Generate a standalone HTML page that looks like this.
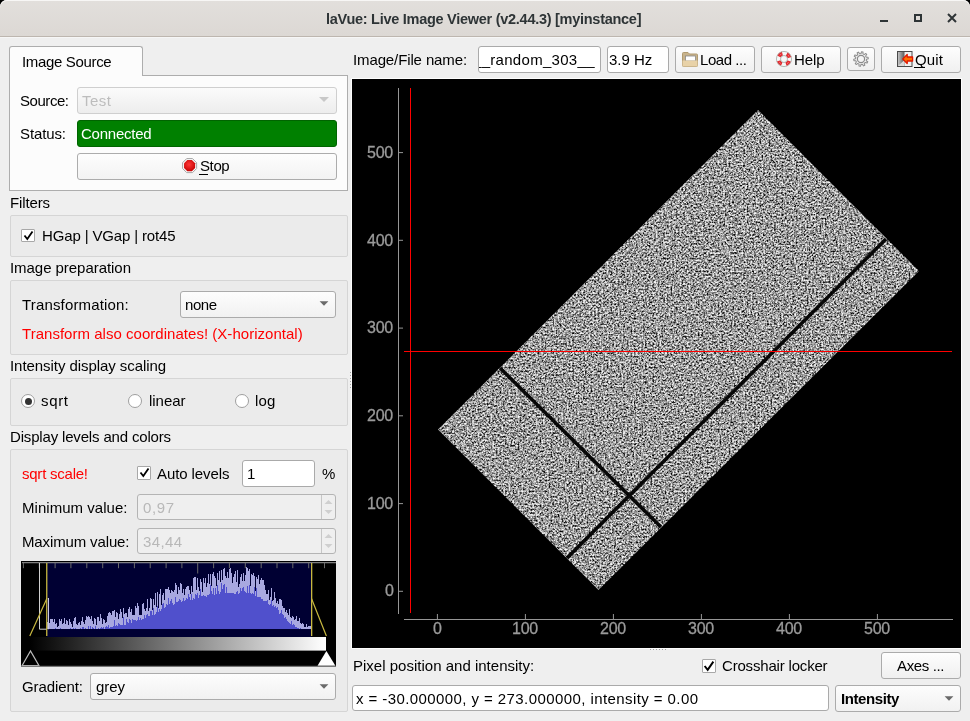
<!DOCTYPE html>
<html><head><meta charset="utf-8"><style>
*{margin:0;padding:0;box-sizing:border-box}
html,body{width:970px;height:721px;overflow:hidden;background:#000}
body{position:relative;font-family:"Liberation Sans",sans-serif}
.t{position:absolute;white-space:nowrap;will-change:transform}
.b{position:absolute}
</style></head>
<body>
<div class="b" style="left:0px;top:0px;width:970px;height:721px;background:#efefef;border-radius:7px 7px 0 0;"></div>
<div class="b" style="left:0px;top:0px;width:970px;height:37px;background:linear-gradient(#e2dfdc,#dcd8d4);border-radius:7px 7px 0 0;border-bottom:1px solid #bdb6af;box-shadow:0 1px 0 #f6f6f6, inset 0 1px 0 #f7f6f5;"></div>
<div class="t" style="left:326.30px;top:11.68px;font-size:14.5px;line-height:14.5px;color:#2e3436;letter-spacing:-0.272px;font-weight:bold;">laVue: Live Image Viewer (v2.44.3) [myinstance]</div>
<div class="b" style="left:880px;top:20px;width:8px;height:2px;background:#2e3436;"></div>
<div class="b" style="left:914px;top:14px;width:8px;height:8px;border:2px solid #2e3436;"></div>
<svg class="b" style="left:946px;top:12px" width="12" height="12" viewBox="0 0 12 12"><path d="M2 2L10 10M10 2L2 10" stroke="#2e3436" stroke-width="2"/></svg>
<div class="b" style="left:9px;top:75px;width:339px;height:116px;background:#fcfcfc;border:1px solid #adadad;"></div>
<div class="b" style="left:9px;top:46px;width:134px;height:30px;background:#fcfcfc;border:1px solid #adadad;border-bottom:none;border-radius:3px 3px 0 0;"></div>
<div class="t" style="left:22.10px;top:54.25px;font-size:15px;line-height:15px;color:#000;letter-spacing:-0.335px;">Image Source</div>
<div class="t" style="left:20.40px;top:93.25px;font-size:15px;line-height:15px;color:#000;letter-spacing:-0.449px;">Source:</div>
<div class="b" style="left:77px;top:87px;width:260px;height:27px;background:linear-gradient(#fbfbfb,#ededed);border:1px solid #cfcfcf;border-radius:3px;"></div>
<div class="t" style="left:82.20px;top:93.25px;font-size:15px;line-height:15px;color:#bdbdbd;letter-spacing:0.430px;">Test</div>
<svg class="b" style="left:319px;top:97px" width="10" height="6"><path d="M0 0H10L5 5Z" fill="#c8c8c8"/></svg>
<div class="t" style="left:20.40px;top:126.25px;font-size:15px;line-height:15px;color:#000;letter-spacing:-0.115px;">Status:</div>
<div class="b" style="left:77px;top:120px;width:260px;height:27px;background:#008000;border:1px solid #006400;border-radius:3px;"></div>
<div class="t" style="left:80.70px;top:126.25px;font-size:15px;line-height:15px;color:#fff;letter-spacing:-0.244px;">Connected</div>
<div class="b" style="left:77px;top:153px;width:260px;height:27px;background:linear-gradient(#fdfdfd,#f3f3f3);border:1px solid #acacac;border-radius:3px;"></div>
<svg class="b" style="left:182px;top:158px" width="16" height="16" viewBox="0 0 16 16"><defs><radialGradient id="sg" cx="0.45" cy="0.4" r="0.65"><stop offset="0" stop-color="#ff3838"/><stop offset="1" stop-color="#c40000"/></radialGradient></defs><path d="M14.62 10.51L10.51 14.62L4.69 14.62L0.58 10.51L0.58 4.69L4.69 0.58L10.51 0.58L14.62 4.69Z" fill="#fafafa" stroke="#9c9c9c" stroke-width="0.9"/><path d="M13.14 9.90L9.90 13.14L5.30 13.14L2.06 9.90L2.06 5.30L5.30 2.06L9.90 2.06L13.14 5.30Z" fill="url(#sg)"/></svg>
<div class="t" style="left:199.50px;top:158.25px;font-size:15px;line-height:15px;color:#000;letter-spacing:-0.386px;">Stop</div>
<div class="b" style="left:199px;top:174px;width:9px;height:1px;background:#000;"></div>
<div class="t" style="left:10.00px;top:195.25px;font-size:15px;line-height:15px;color:#000;letter-spacing:-0.139px;">Filters</div>
<div class="b" style="left:10px;top:215px;width:338px;height:42px;background:#ebebeb;border:1px solid #d5d5d5;border-radius:2px;"></div>
<div class="b" style="left:21px;top:229px;width:14px;height:13px;background:#fff;border:1px solid #a8a8a8;border-radius:1px;"></div>
<svg class="b" style="left:23px;top:230px" width="11" height="11" viewBox="0 0 11 11"><path d="M1.5 5.5L4.3 9L9.5 1.5" fill="none" stroke="#000" stroke-width="1.8"/></svg>
<div class="t" style="left:41.80px;top:228.25px;font-size:15px;line-height:15px;color:#000;letter-spacing:-0.144px;">HGap | VGap | rot45</div>
<div class="t" style="left:10.00px;top:260.25px;font-size:15px;line-height:15px;color:#000;letter-spacing:-0.047px;">Image preparation</div>
<div class="b" style="left:10px;top:280px;width:338px;height:75px;background:#ebebeb;border:1px solid #d5d5d5;border-radius:2px;"></div>
<div class="t" style="left:21.70px;top:297.25px;font-size:15px;line-height:15px;color:#000;letter-spacing:0.158px;">Transformation:</div>
<div class="b" style="left:180px;top:291px;width:156px;height:27px;background:linear-gradient(#fdfdfd,#f1f1f1);border:1px solid #ababab;border-radius:3px;"></div>
<div class="t" style="left:185.00px;top:297.25px;font-size:15px;line-height:15px;color:#000;letter-spacing:-0.457px;">none</div>
<svg class="b" style="left:319px;top:301px" width="10" height="6"><path d="M0.6 0.3H9.4L5 4.8Z" fill="#6a6a6a"/></svg>
<div class="t" style="left:21.70px;top:326.25px;font-size:15px;line-height:15px;color:#f00;letter-spacing:0.028px;">Transform also coordinates! (X-horizontal)</div>
<div class="t" style="left:10.20px;top:358.25px;font-size:15px;line-height:15px;color:#000;letter-spacing:-0.058px;">Intensity display scaling</div>
<div class="b" style="left:10px;top:378px;width:338px;height:48px;background:#ebebeb;border:1px solid #d5d5d5;border-radius:2px;"></div>
<div class="b" style="left:21px;top:394px;width:14px;height:14px;border-radius:50%;background:#fff;border:1px solid #9f9f9f;"></div>
<div class="b" style="left:24.5px;top:397.5px;width:7px;height:7px;border-radius:50%;background:#333;"></div>
<div class="t" style="left:41.40px;top:393.25px;font-size:15px;line-height:15px;color:#000;letter-spacing:0.665px;">sqrt</div>
<div class="b" style="left:128px;top:394px;width:14px;height:14px;border-radius:50%;background:#fff;border:1px solid #9f9f9f;"></div>
<div class="t" style="left:148.50px;top:393.25px;font-size:15px;line-height:15px;color:#000;letter-spacing:-0.038px;">linear</div>
<div class="b" style="left:235px;top:394px;width:14px;height:14px;border-radius:50%;background:#fff;border:1px solid #9f9f9f;"></div>
<div class="t" style="left:255.00px;top:393.25px;font-size:15px;line-height:15px;color:#000;letter-spacing:0.141px;">log</div>
<div class="t" style="left:9.70px;top:429.25px;font-size:15px;line-height:15px;color:#000;letter-spacing:-0.166px;">Display levels and colors</div>
<div class="b" style="left:10px;top:449px;width:338px;height:263px;background:#ebebeb;border:1px solid #d5d5d5;border-radius:2px;"></div>
<div class="t" style="left:21.50px;top:466.25px;font-size:15px;line-height:15px;color:#f00;letter-spacing:-0.236px;">sqrt scale!</div>
<div class="b" style="left:137px;top:466px;width:14px;height:14px;background:#fff;border:1px solid #a8a8a8;border-radius:1px;"></div>
<svg class="b" style="left:138.5px;top:467px" width="11" height="11" viewBox="0 0 11 11"><path d="M1.5 5.5L4.3 9L9.5 1.5" fill="none" stroke="#000" stroke-width="1.8"/></svg>
<div class="t" style="left:157.00px;top:466.25px;font-size:15px;line-height:15px;color:#000;letter-spacing:-0.098px;">Auto levels</div>
<div class="b" style="left:242px;top:460px;width:73px;height:27px;background:#fff;border:1px solid #aaaaaa;border-radius:3px;"></div>
<div class="t" style="left:247.00px;top:466.25px;font-size:15px;line-height:15px;color:#000;">1</div>
<div class="t" style="left:321.60px;top:466.25px;font-size:15px;line-height:15px;color:#000;">%</div>
<div class="t" style="left:21.50px;top:500.25px;font-size:15px;line-height:15px;color:#000;letter-spacing:0.036px;">Minimum value:</div>
<div class="b" style="left:137px;top:494px;width:199px;height:26px;background:#efefef;border:1px solid #b4b4b4;border-radius:3px;"></div>
<div class="b" style="left:321px;top:495px;width:1px;height:24px;background:#c6c6c6;"></div>
<svg class="b" style="left:324px;top:499px" width="9" height="16"><path d="M0.5 5L4.5 1L8.5 5Z M0.5 11L4.5 15L8.5 11Z" fill="#cfcfcf"/></svg>
<div class="t" style="left:143.00px;top:500.25px;font-size:15px;line-height:15px;color:#b8b8b8;letter-spacing:0.602px;">0,97</div>
<div class="t" style="left:21.50px;top:534.25px;font-size:15px;line-height:15px;color:#000;letter-spacing:-0.131px;">Maximum value:</div>
<div class="b" style="left:137px;top:528px;width:199px;height:26px;background:#efefef;border:1px solid #b4b4b4;border-radius:3px;"></div>
<div class="b" style="left:321px;top:529px;width:1px;height:24px;background:#c6c6c6;"></div>
<svg class="b" style="left:324px;top:533px" width="9" height="16"><path d="M0.5 5L4.5 1L8.5 5Z M0.5 11L4.5 15L8.5 11Z" fill="#cfcfcf"/></svg>
<div class="t" style="left:143.00px;top:534.25px;font-size:15px;line-height:15px;color:#b8b8b8;letter-spacing:0.366px;">34,44</div>
<svg class="b" style="left:21px;top:561px" width="315" height="106" viewBox="0 0 315 106"><rect x="0" y="0" width="315" height="106" fill="#000"/><rect x="26" y="1.5" width="264.6" height="74.5" fill="#000033"/><rect x="1" y="1.2" width="314" height="1" fill="#a0a0a0"/><rect x="1.9" y="2" width="1" height="5.2" fill="#6a6a6a"/><rect x="17.8" y="2" width="1" height="5.2" fill="#6a6a6a"/><rect x="33.6" y="2" width="1" height="5.2" fill="#6a6a6a"/><rect x="49.4" y="2" width="1" height="5.2" fill="#6a6a6a"/><rect x="65.3" y="2" width="1" height="5.2" fill="#6a6a6a"/><rect x="81.2" y="2" width="1" height="5.2" fill="#6a6a6a"/><rect x="97.0" y="2" width="1" height="5.2" fill="#6a6a6a"/><rect x="112.9" y="2" width="1" height="5.2" fill="#6a6a6a"/><rect x="128.7" y="2" width="1" height="5.2" fill="#6a6a6a"/><rect x="144.6" y="2" width="1" height="5.2" fill="#6a6a6a"/><rect x="160.4" y="2" width="1" height="5.2" fill="#6a6a6a"/><rect x="176.2" y="2" width="1" height="10.5" fill="#6a6a6a"/><rect x="192.1" y="2" width="1" height="5.2" fill="#6a6a6a"/><rect x="207.9" y="2" width="1" height="5.2" fill="#6a6a6a"/><rect x="223.8" y="2" width="1" height="5.2" fill="#6a6a6a"/><rect x="239.7" y="2" width="1" height="5.2" fill="#6a6a6a"/><rect x="255.5" y="2" width="1" height="5.2" fill="#6a6a6a"/><rect x="271.3" y="2" width="1" height="5.2" fill="#6a6a6a"/><rect x="287.2" y="2" width="1" height="5.2" fill="#6a6a6a"/><rect x="303.0" y="2" width="1" height="5.2" fill="#6a6a6a"/><path d="M26 60.5V68.2h1V60.5ZM27 63.5V68.2h1V63.5ZM28 62.3V68.2h1V62.3ZM29 58.1V68.2h1V58.1ZM30 57.8V68.2h1V57.8ZM31 58.0V68.2h1V58.0ZM32 61.0V68.2h1V61.0ZM33 58.3V68.2h1V58.3ZM34 62.9V68.2h1V62.9ZM35 62.3V68.2h1V62.3ZM36 66.2V68.2h1V66.2ZM37 65.0V68.2h1V65.0ZM38 58.1V68.2h1V58.1ZM39 59.5V68.2h1V59.5ZM40 58.3V68.2h1V58.3ZM41 62.6V68.2h1V62.6ZM42 61.6V68.2h1V61.6ZM43 57.1V68.2h1V57.1ZM44 62.8V68.2h1V62.8ZM45 59.2V68.2h1V59.2ZM46 60.4V68.2h1V60.4ZM47 63.8V68.2h1V63.8ZM48 58.3V68.2h1V58.3ZM49 61.0V68.2h1V61.0ZM50 63.0V68.2h1V63.0ZM51 65.5V68.2h1V65.5ZM52 59.7V68.2h1V59.7ZM53 57.2V68.2h1V57.2ZM54 56.1V68.2h1V56.1ZM55 63.0V68.2h1V63.0ZM56 64.2V68.2h1V64.2ZM57 62.2V68.2h1V62.2ZM58 61.0V68.2h1V61.0ZM59 63.6V68.2h1V63.6ZM60 59.8V68.2h1V59.8ZM61 55.8V68.2h1V55.8ZM62 61.4V68.2h1V61.4ZM63 63.2V68.2h1V63.2ZM64 58.6V68.2h1V58.6ZM65 55.2V68.2h1V55.2ZM66 56.4V68.2h1V56.4ZM67 55.4V68.2h1V55.4ZM68 55.9V68.2h1V55.9ZM69 58.4V68.2h1V58.4ZM70 55.4V68.2h1V55.4ZM71 59.9V68.2h1V59.9ZM72 62.7V68.2h1V62.7ZM73 57.0V68.2h1V57.0ZM74 57.7V68.2h1V57.7ZM75 64.0V68.2h1V64.0ZM76 55.8V68.2h1V55.8ZM77 56.1V68.2h1V56.1ZM78 59.5V68.2h1V59.5ZM79 53.4V68.2h1V53.4ZM80 56.6V68.2h1V56.6ZM81 62.9V68.2h1V62.9ZM82 57.7V68.2h1V57.7ZM83 59.3V68.2h1V59.3ZM84 61.7V68.2h1V61.7ZM85 61.1V68.2h1V61.1ZM86 55.2V68.2h1V55.2ZM87 51.9V68.2h1V51.9ZM88 51.2V68.2h1V51.2ZM89 52.4V68.2h1V52.4ZM90 53.6V68.2h1V53.6ZM91 49.7V68.2h1V49.7ZM92 50.3V68.2h1V50.3ZM93 49.3V68.2h1V49.3ZM94 55.8V68.2h1V55.8ZM95 51.1V68.2h1V51.1ZM96 52.2V68.2h1V52.2ZM97 58.2V68.2h1V58.2ZM98 52.9V68.2h1V52.9ZM99 48.1V68.2h1V48.1ZM100 50.8V68.2h1V50.8ZM101 57.1V68.2h1V57.1ZM102 46.5V68.2h1V46.5ZM103 52.5V68.2h1V52.5ZM104 52.4V68.2h1V52.4ZM105 51.9V68.2h1V51.9ZM106 56.3V68.2h1V56.3ZM107 47.8V68.2h1V47.8ZM108 46.3V68.2h1V46.3ZM109 50.8V68.2h1V50.8ZM110 47.8V68.2h1V47.8ZM111 54.1V68.2h1V54.1ZM112 54.4V68.2h1V54.4ZM113 53.6V68.2h1V53.6ZM114 45.2V68.2h1V45.2ZM115 46.6V68.2h1V46.6ZM116 42.3V68.2h1V42.3ZM117 44.8V68.2h1V44.8ZM118 54.2V68.2h1V54.2ZM119 53.6V68.2h1V53.6ZM120 53.6V68.2h1V53.6ZM121 43.1V68.2h1V43.1ZM122 42.3V68.2h1V42.3ZM123 47.6V68.2h1V47.6ZM124 50.3V68.2h1V50.3ZM125 46.8V68.2h1V46.8ZM126 37.7V68.2h1V37.7ZM127 50.0V68.2h1V50.0ZM128 46.8V68.2h1V46.8ZM129 36.6V68.2h1V36.6ZM130 38.3V68.2h1V38.3ZM131 49.4V68.2h1V49.4ZM132 38.1V68.2h1V38.1ZM133 43.6V68.2h1V43.6ZM134 31.8V68.2h1V31.8ZM135 46.3V68.2h1V46.3ZM136 30.5V68.2h1V30.5ZM137 46.5V68.2h1V46.5ZM138 32.6V68.2h1V32.6ZM139 27.9V68.2h1V27.9ZM140 44.0V68.2h1V44.0ZM141 34.4V68.2h1V34.4ZM142 32.2V68.2h1V32.2ZM143 39.0V68.2h1V39.0ZM144 28.2V68.2h1V28.2ZM145 27.7V68.2h1V27.7ZM146 27.7V68.2h1V27.7ZM147 25.5V68.2h1V25.5ZM148 28.7V68.2h1V28.7ZM149 32.4V68.2h1V32.4ZM150 29.3V68.2h1V29.3ZM151 30.4V68.2h1V30.4ZM152 30.5V68.2h1V30.5ZM153 28.8V68.2h1V28.8ZM154 21.8V68.2h1V21.8ZM155 23.9V68.2h1V23.9ZM156 32.9V68.2h1V32.9ZM157 25.7V68.2h1V25.7ZM158 29.3V68.2h1V29.3ZM159 21.5V68.2h1V21.5ZM160 23.3V68.2h1V23.3ZM161 32.2V68.2h1V32.2ZM162 28.0V68.2h1V28.0ZM163 34.3V68.2h1V34.3ZM164 28.3V68.2h1V28.3ZM165 26.1V68.2h1V26.1ZM166 24.6V68.2h1V24.6ZM167 24.8V68.2h1V24.8ZM168 28.7V68.2h1V28.7ZM169 33.3V68.2h1V33.3ZM170 25.3V68.2h1V25.3ZM171 30.6V68.2h1V30.6ZM172 16.8V68.2h1V16.8ZM173 15.9V68.2h1V15.9ZM174 15.8V68.2h1V15.8ZM175 28.7V68.2h1V28.7ZM176 17.0V68.2h1V17.0ZM177 25.9V68.2h1V25.9ZM178 30.0V68.2h1V30.0ZM179 17.7V68.2h1V17.7ZM180 20.7V68.2h1V20.7ZM181 31.3V68.2h1V31.3ZM182 16.5V68.2h1V16.5ZM183 22.3V68.2h1V22.3ZM184 16.8V68.2h1V16.8ZM185 25.6V68.2h1V25.6ZM186 22.3V68.2h1V22.3ZM187 13.3V68.2h1V13.3ZM188 22.9V68.2h1V22.9ZM189 13.1V68.2h1V13.1ZM190 25.4V68.2h1V25.4ZM191 12.8V68.2h1V12.8ZM192 11.4V68.2h1V11.4ZM193 14.8V68.2h1V14.8ZM194 17.2V68.2h1V17.2ZM195 24.6V68.2h1V24.6ZM196 11.5V68.2h1V11.5ZM197 19.1V68.2h1V19.1ZM198 9.7V68.2h1V9.7ZM199 20.9V68.2h1V20.9ZM200 8.6V68.2h1V8.6ZM201 19.4V68.2h1V19.4ZM202 8.0V68.2h1V8.0ZM203 7.3V68.2h1V7.3ZM204 15.0V68.2h1V15.0ZM205 17.1V68.2h1V17.1ZM206 11.0V68.2h1V11.0ZM207 16.5V68.2h1V16.5ZM208 7.8V68.2h1V7.8ZM209 6.6V68.2h1V6.6ZM210 11.8V68.2h1V11.8ZM211 21.7V68.2h1V21.7ZM212 15.8V68.2h1V15.8ZM213 12.5V68.2h1V12.5ZM214 10.4V68.2h1V10.4ZM215 21.1V68.2h1V21.1ZM216 9.1V68.2h1V9.1ZM217 25.8V68.2h1V25.8ZM218 23.1V68.2h1V23.1ZM219 15.6V68.2h1V15.6ZM220 13.3V68.2h1V13.3ZM221 20.0V68.2h1V20.0ZM222 12.2V68.2h1V12.2ZM223 20.4V68.2h1V20.4ZM224 13.5V68.2h1V13.5ZM225 6.2V68.2h1V6.2ZM226 6.5V68.2h1V6.5ZM227 10.4V68.2h1V10.4ZM228 7.8V68.2h1V7.8ZM229 25.4V68.2h1V25.4ZM230 13.2V68.2h1V13.2ZM231 14.2V68.2h1V14.2ZM232 12.4V68.2h1V12.4ZM233 15.2V68.2h1V15.2ZM234 30.2V68.2h1V30.2ZM235 16.4V68.2h1V16.4ZM236 18.4V68.2h1V18.4ZM237 14.1V68.2h1V14.1ZM238 22.8V68.2h1V22.8ZM239 18.8V68.2h1V18.8ZM240 16.8V68.2h1V16.8ZM241 18.8V68.2h1V18.8ZM242 19.1V68.2h1V19.1ZM243 24.0V68.2h1V24.0ZM244 29.4V68.2h1V29.4ZM245 33.0V68.2h1V33.0ZM246 33.3V68.2h1V33.3ZM247 29.0V68.2h1V29.0ZM248 39.3V68.2h1V39.3ZM249 35.9V68.2h1V35.9ZM250 27.1V68.2h1V27.1ZM251 40.2V68.2h1V40.2ZM252 38.6V68.2h1V38.6ZM253 31.2V68.2h1V31.2ZM254 37.0V68.2h1V37.0ZM255 42.1V68.2h1V42.1ZM256 40.1V68.2h1V40.1ZM257 42.5V68.2h1V42.5ZM258 37.9V68.2h1V37.9ZM259 38.0V68.2h1V38.0ZM260 38.9V68.2h1V38.9ZM261 45.3V68.2h1V45.3ZM262 47.2V68.2h1V47.2ZM263 46.7V68.2h1V46.7ZM264 51.3V68.2h1V51.3ZM265 49.1V68.2h1V49.1ZM266 51.9V68.2h1V51.9ZM267 53.8V68.2h1V53.8ZM268 48.4V68.2h1V48.4ZM269 55.8V68.2h1V55.8ZM270 56.5V68.2h1V56.5ZM271 54.9V68.2h1V54.9ZM272 55.5V68.2h1V55.5ZM273 58.7V68.2h1V58.7ZM274 58.3V68.2h1V58.3ZM275 55.3V68.2h1V55.3ZM276 60.4V68.2h1V60.4ZM277 59.8V68.2h1V59.8ZM278 57.4V68.2h1V57.4ZM279 61.9V68.2h1V61.9ZM280 62.6V68.2h1V62.6ZM281 62.4V68.2h1V62.4ZM282 62.8V68.2h1V62.8ZM283 65.7V68.2h1V65.7ZM284 66.4V68.2h1V66.4ZM285 62.6V68.2h1V62.6ZM286 66.3V68.2h1V66.3ZM287 65.2V68.2h1V65.2ZM288 64.8V68.2h1V64.8ZM289 65.4V68.2h1V65.4Z" fill="#a8a8e0" shape-rendering="crispEdges"/><path d="M26 68.2V68.2h1V68.2ZM27 68.2V68.2h1V68.2ZM28 68.2V68.2h1V68.2ZM29 68.2V68.2h1V68.2ZM30 68.2V68.2h1V68.2ZM31 68.2V68.2h1V68.2ZM32 67.7V68.2h1V67.7ZM33 68.2V68.2h1V68.2ZM34 67.4V68.2h1V67.4ZM35 68.2V68.2h1V68.2ZM36 68.2V68.2h1V68.2ZM37 68.2V68.2h1V68.2ZM38 68.2V68.2h1V68.2ZM39 67.1V68.2h1V67.1ZM40 68.2V68.2h1V68.2ZM41 68.2V68.2h1V68.2ZM42 68.2V68.2h1V68.2ZM43 68.2V68.2h1V68.2ZM44 68.2V68.2h1V68.2ZM45 68.2V68.2h1V68.2ZM46 68.2V68.2h1V68.2ZM47 68.2V68.2h1V68.2ZM48 68.2V68.2h1V68.2ZM49 66.7V68.2h1V66.7ZM50 68.2V68.2h1V68.2ZM51 68.2V68.2h1V68.2ZM52 67.2V68.2h1V67.2ZM53 68.2V68.2h1V68.2ZM54 67.0V68.2h1V67.0ZM55 68.2V68.2h1V68.2ZM56 68.2V68.2h1V68.2ZM57 68.2V68.2h1V68.2ZM58 68.2V68.2h1V68.2ZM59 67.1V68.2h1V67.1ZM60 67.6V68.2h1V67.6ZM61 66.3V68.2h1V66.3ZM62 65.6V68.2h1V65.6ZM63 68.2V68.2h1V68.2ZM64 67.1V68.2h1V67.1ZM65 68.0V68.2h1V68.0ZM66 68.2V68.2h1V68.2ZM67 65.3V68.2h1V65.3ZM68 68.2V68.2h1V68.2ZM69 65.2V68.2h1V65.2ZM70 67.9V68.2h1V67.9ZM71 65.6V68.2h1V65.6ZM72 66.8V68.2h1V66.8ZM73 68.1V68.2h1V68.1ZM74 64.7V68.2h1V64.7ZM75 68.2V68.2h1V68.2ZM76 68.2V68.2h1V68.2ZM77 67.3V68.2h1V67.3ZM78 68.2V68.2h1V68.2ZM79 67.1V68.2h1V67.1ZM80 66.4V68.2h1V66.4ZM81 66.8V68.2h1V66.8ZM82 65.9V68.2h1V65.9ZM83 67.6V68.2h1V67.6ZM84 65.7V68.2h1V65.7ZM85 65.3V68.2h1V65.3ZM86 66.1V68.2h1V66.1ZM87 63.8V68.2h1V63.8ZM88 66.6V68.2h1V66.6ZM89 66.3V68.2h1V66.3ZM90 66.3V68.2h1V66.3ZM91 65.9V68.2h1V65.9ZM92 64.9V68.2h1V64.9ZM93 59.4V68.2h1V59.4ZM94 65.4V68.2h1V65.4ZM95 64.4V68.2h1V64.4ZM96 65.0V68.2h1V65.0ZM97 61.6V68.2h1V61.6ZM98 63.3V68.2h1V63.3ZM99 64.4V68.2h1V64.4ZM100 63.8V68.2h1V63.8ZM101 64.0V68.2h1V64.0ZM102 56.0V68.2h1V56.0ZM103 63.6V68.2h1V63.6ZM104 63.5V68.2h1V63.5ZM105 57.8V68.2h1V57.8ZM106 61.4V68.2h1V61.4ZM107 61.7V68.2h1V61.7ZM108 57.6V68.2h1V57.6ZM109 58.7V68.2h1V58.7ZM110 61.5V68.2h1V61.5ZM111 58.0V68.2h1V58.0ZM112 59.0V68.2h1V59.0ZM113 59.0V68.2h1V59.0ZM114 58.6V68.2h1V58.6ZM115 60.4V68.2h1V60.4ZM116 59.4V68.2h1V59.4ZM117 56.2V68.2h1V56.2ZM118 59.0V68.2h1V59.0ZM119 56.5V68.2h1V56.5ZM120 58.6V68.2h1V58.6ZM121 58.3V68.2h1V58.3ZM122 58.0V68.2h1V58.0ZM123 53.8V68.2h1V53.8ZM124 56.8V68.2h1V56.8ZM125 53.9V68.2h1V53.9ZM126 52.6V68.2h1V52.6ZM127 54.5V68.2h1V54.5ZM128 55.0V68.2h1V55.0ZM129 49.7V68.2h1V49.7ZM130 49.8V68.2h1V49.8ZM131 54.4V68.2h1V54.4ZM132 47.1V68.2h1V47.1ZM133 53.9V68.2h1V53.9ZM134 53.4V68.2h1V53.4ZM135 51.0V68.2h1V51.0ZM136 45.2V68.2h1V45.2ZM137 50.8V68.2h1V50.8ZM138 48.4V68.2h1V48.4ZM139 50.4V68.2h1V50.4ZM140 48.4V68.2h1V48.4ZM141 42.5V68.2h1V42.5ZM142 42.0V68.2h1V42.0ZM143 47.0V68.2h1V47.0ZM144 45.6V68.2h1V45.6ZM145 42.7V68.2h1V42.7ZM146 44.0V68.2h1V44.0ZM147 37.1V68.2h1V37.1ZM148 43.3V68.2h1V43.3ZM149 39.7V68.2h1V39.7ZM150 38.0V68.2h1V38.0ZM151 42.2V68.2h1V42.2ZM152 43.8V68.2h1V43.8ZM153 43.3V68.2h1V43.3ZM154 36.4V68.2h1V36.4ZM155 40.8V68.2h1V40.8ZM156 41.2V68.2h1V41.2ZM157 40.2V68.2h1V40.2ZM158 38.2V68.2h1V38.2ZM159 38.7V68.2h1V38.7ZM160 41.0V68.2h1V41.0ZM161 40.2V68.2h1V40.2ZM162 37.4V68.2h1V37.4ZM163 40.3V68.2h1V40.3ZM164 39.1V68.2h1V39.1ZM165 37.0V68.2h1V37.0ZM166 38.0V68.2h1V38.0ZM167 33.2V68.2h1V33.2ZM168 35.5V68.2h1V35.5ZM169 39.2V68.2h1V39.2ZM170 33.0V68.2h1V33.0ZM171 38.9V68.2h1V38.9ZM172 36.6V68.2h1V36.6ZM173 37.8V68.2h1V37.8ZM174 33.2V68.2h1V33.2ZM175 34.2V68.2h1V34.2ZM176 32.4V68.2h1V32.4ZM177 37.3V68.2h1V37.3ZM178 33.8V68.2h1V33.8ZM179 28.2V68.2h1V28.2ZM180 34.8V68.2h1V34.8ZM181 34.7V68.2h1V34.7ZM182 34.4V68.2h1V34.4ZM183 35.2V68.2h1V35.2ZM184 34.7V68.2h1V34.7ZM185 35.5V68.2h1V35.5ZM186 34.0V68.2h1V34.0ZM187 33.8V68.2h1V33.8ZM188 33.3V68.2h1V33.3ZM189 24.1V68.2h1V24.1ZM190 30.1V68.2h1V30.1ZM191 33.4V68.2h1V33.4ZM192 27.1V68.2h1V27.1ZM193 33.6V68.2h1V33.6ZM194 26.8V68.2h1V26.8ZM195 33.0V68.2h1V33.0ZM196 24.0V68.2h1V24.0ZM197 29.5V68.2h1V29.5ZM198 32.6V68.2h1V32.6ZM199 31.4V68.2h1V31.4ZM200 22.0V68.2h1V22.0ZM201 28.3V68.2h1V28.3ZM202 23.5V68.2h1V23.5ZM203 23.1V68.2h1V23.1ZM204 31.5V68.2h1V31.5ZM205 25.9V68.2h1V25.9ZM206 32.3V68.2h1V32.3ZM207 32.0V68.2h1V32.0ZM208 32.2V68.2h1V32.2ZM209 32.0V68.2h1V32.0ZM210 31.5V68.2h1V31.5ZM211 32.0V68.2h1V32.0ZM212 32.2V68.2h1V32.2ZM213 32.5V68.2h1V32.5ZM214 32.5V68.2h1V32.5ZM215 30.8V68.2h1V30.8ZM216 29.9V68.2h1V29.9ZM217 32.5V68.2h1V32.5ZM218 31.6V68.2h1V31.6ZM219 26.6V68.2h1V26.6ZM220 30.0V68.2h1V30.0ZM221 26.5V68.2h1V26.5ZM222 25.5V68.2h1V25.5ZM223 30.0V68.2h1V30.0ZM224 31.4V68.2h1V31.4ZM225 32.3V68.2h1V32.3ZM226 25.4V68.2h1V25.4ZM227 32.3V68.2h1V32.3ZM228 24.1V68.2h1V24.1ZM229 31.7V68.2h1V31.7ZM230 33.4V68.2h1V33.4ZM231 32.3V68.2h1V32.3ZM232 32.7V68.2h1V32.7ZM233 26.0V68.2h1V26.0ZM234 35.0V68.2h1V35.0ZM235 27.0V68.2h1V27.0ZM236 35.6V68.2h1V35.6ZM237 35.5V68.2h1V35.5ZM238 35.8V68.2h1V35.8ZM239 35.7V68.2h1V35.7ZM240 37.8V68.2h1V37.8ZM241 37.5V68.2h1V37.5ZM242 39.8V68.2h1V39.8ZM243 40.1V68.2h1V40.1ZM244 39.7V68.2h1V39.7ZM245 40.1V68.2h1V40.1ZM246 39.1V68.2h1V39.1ZM247 42.8V68.2h1V42.8ZM248 44.3V68.2h1V44.3ZM249 43.2V68.2h1V43.2ZM250 39.3V68.2h1V39.3ZM251 45.3V68.2h1V45.3ZM252 44.4V68.2h1V44.4ZM253 45.8V68.2h1V45.8ZM254 44.7V68.2h1V44.7ZM255 47.0V68.2h1V47.0ZM256 46.4V68.2h1V46.4ZM257 49.4V68.2h1V49.4ZM258 52.5V68.2h1V52.5ZM259 52.4V68.2h1V52.4ZM260 49.0V68.2h1V49.0ZM261 53.4V68.2h1V53.4ZM262 54.2V68.2h1V54.2ZM263 57.3V68.2h1V57.3ZM264 56.3V68.2h1V56.3ZM265 57.8V68.2h1V57.8ZM266 60.2V68.2h1V60.2ZM267 60.9V68.2h1V60.9ZM268 61.6V68.2h1V61.6ZM269 62.9V68.2h1V62.9ZM270 60.2V68.2h1V60.2ZM271 63.5V68.2h1V63.5ZM272 62.5V68.2h1V62.5ZM273 64.0V68.2h1V64.0ZM274 65.7V68.2h1V65.7ZM275 65.9V68.2h1V65.9ZM276 66.5V68.2h1V66.5ZM277 67.3V68.2h1V67.3ZM278 67.5V68.2h1V67.5ZM279 66.9V68.2h1V66.9ZM280 68.2V68.2h1V68.2ZM281 68.2V68.2h1V68.2ZM282 68.2V68.2h1V68.2ZM283 68.2V68.2h1V68.2ZM284 68.2V68.2h1V68.2ZM285 68.2V68.2h1V68.2ZM286 68.2V68.2h1V68.2ZM287 68.2V68.2h1V68.2ZM288 68.2V68.2h1V68.2ZM289 68.2V68.2h1V68.2Z" fill="#5050cc" shape-rendering="crispEdges"/><path d="M18.5 2V68.2H26" fill="none" stroke="#d0d0d0" stroke-width="1"/><rect x="27" y="37" width="1" height="31.2" fill="#c8c8e8"/><rect x="25.1" y="2" width="1.3" height="73" fill="#c8b840"/><rect x="290" y="2" width="1.3" height="73" fill="#c8b840"/><path d="M8.8 75L26 37.3M290.6 37.7L305.4 75" stroke="#c8b840" stroke-width="1.2"/><defs><linearGradient id="gg" x1="0" x2="1"><stop offset="0" stop-color="#000"/><stop offset="1" stop-color="#fff"/></linearGradient></defs><rect x="8.8" y="76" width="296.2" height="13.6" fill="url(#gg)"/><path d="M1 104.7L9.5 90L18 104.7Z" fill="#000" stroke="#bbb" stroke-width="1.2"/><path d="M296.5 104.7L305.4 90L314.4 104.7Z" fill="#fff"/><rect x="0" y="104.8" width="315" height="1.2" fill="#777"/></svg>
<div class="t" style="left:21.60px;top:679.25px;font-size:15px;line-height:15px;color:#000;letter-spacing:-0.088px;">Gradient:</div>
<div class="b" style="left:90px;top:673px;width:246px;height:27px;background:linear-gradient(#fdfdfd,#f1f1f1);border:1px solid #ababab;border-radius:3px;"></div>
<div class="t" style="left:95.50px;top:679.25px;font-size:15px;line-height:15px;color:#000;letter-spacing:-0.060px;">grey</div>
<svg class="b" style="left:319px;top:684px" width="10" height="6"><path d="M0.6 0.3H9.4L5 4.8Z" fill="#6a6a6a"/></svg>
<div class="t" style="left:353.10px;top:52.25px;font-size:15px;line-height:15px;color:#000;letter-spacing:-0.119px;">Image/File name:</div>
<div class="b" style="left:478px;top:46px;width:123px;height:27px;background:#fff;border:1px solid #aaaaaa;border-radius:3px;"></div>
<div class="b" style="left:479px;top:47px;width:121px;height:25px;overflow:hidden">
<div class="t" style="left:-5.70px;top:5.25px;font-size:15px;line-height:15px;color:#000;letter-spacing:0.300px;">__random_303__</div>
</div>
<div class="b" style="left:607px;top:46px;width:62px;height:27px;background:#fff;border:1px solid #aaaaaa;border-radius:3px;"></div>
<div class="t" style="left:609.00px;top:52.25px;font-size:15px;line-height:15px;color:#000;letter-spacing:-0.010px;">3.9 Hz</div>
<div class="b" style="left:675px;top:46px;width:80px;height:27px;background:linear-gradient(#fdfdfd,#f0f0f0);border:1px solid #ababab;border-radius:3px;"></div>
<svg class="b" style="left:682px;top:52px" width="16" height="15" viewBox="0 0 16 15"><path d="M0.5 1.5Q0.5 0.5 1.5 0.5H6L7.5 2H14.5Q15.5 2 15.5 3V13.5Q15.5 14.5 14.5 14.5H1.5Q0.5 14.5 0.5 13.5Z" fill="#c8b38c" stroke="#b09a70" stroke-width="1"/><rect x="3.5" y="4" width="10" height="5" fill="#fff" stroke="#888" stroke-width="0.8"/><path d="M0.5 8.5H15.5V13.5Q15.5 14.5 14.5 14.5H1.5Q0.5 14.5 0.5 13.5Z" fill="#e8d2a8"/></svg>
<div class="t" style="left:699.70px;top:52.25px;font-size:15px;line-height:15px;color:#000;letter-spacing:-0.463px;">Load ...</div>
<div class="b" style="left:761px;top:46px;width:80px;height:27px;background:linear-gradient(#fdfdfd,#f0f0f0);border:1px solid #ababab;border-radius:3px;"></div>
<svg class="b" style="left:776px;top:51px" width="16" height="16" viewBox="0 0 16 16"><circle cx="8" cy="8" r="5.6" fill="none" stroke="#f6f6f6" stroke-width="4.2"/><circle cx="8" cy="8" r="5.6" fill="none" stroke="#e4262c" stroke-width="4.2" stroke-dasharray="4.3 4.497" stroke-dashoffset="6.65"/><circle cx="8" cy="8" r="5.6" fill="none" stroke="#ffb0b0" stroke-width="1" stroke-dasharray="2 6.797" stroke-dashoffset="5.4" opacity="0.6"/><circle cx="8" cy="8" r="7.6" fill="none" stroke="#a4aaa4" stroke-width="0.8"/><circle cx="8" cy="8" r="3.5" fill="#f8f8f8" stroke="#a0a6a0" stroke-width="0.8"/></svg>
<div class="t" style="left:793.60px;top:52.25px;font-size:15px;line-height:15px;color:#000;letter-spacing:-0.117px;">Help</div>
<div class="b" style="left:847px;top:47px;width:28px;height:24px;background:linear-gradient(#fdfdfd,#f0f0f0);border:1px solid #ababab;border-radius:3px;"></div>
<svg class="b" style="left:853px;top:51px" width="16" height="16" viewBox="0 0 16 16"><path d="M8.00 2.50L8.55 0.72L10.04 0.99L9.93 2.85L11.23 3.55L12.72 2.43L13.77 3.53L12.59 4.97L13.23 6.30L15.09 6.27L15.30 7.77L13.49 8.24L13.23 9.70L14.75 10.77L14.04 12.10L12.30 11.43L11.23 12.45L11.83 14.21L10.47 14.87L9.47 13.30L8.00 13.50L7.45 15.28L5.96 15.01L6.07 13.15L4.77 12.45L3.28 13.57L2.23 12.47L3.41 11.03L2.77 9.70L0.91 9.73L0.70 8.23L2.51 7.76L2.77 6.30L1.25 5.23L1.96 3.90L3.70 4.57L4.77 3.55L4.17 1.79L5.53 1.13L6.53 2.70Z" fill="#f2f2f2" stroke="#8f8f8f" stroke-width="1.05" stroke-linejoin="round"/><circle cx="8" cy="8" r="3.6" fill="#f4f4f4" stroke="#8a8a8a" stroke-width="1.2"/></svg>
<div class="b" style="left:881px;top:46px;width:80px;height:27px;background:linear-gradient(#fdfdfd,#f0f0f0);border:1px solid #ababab;border-radius:3px;"></div>
<svg class="b" style="left:896px;top:50px" width="18" height="18" viewBox="0 0 18 18"><defs><linearGradient id="dg" x1="0" x2="1"><stop offset="0" stop-color="#c4c4c4"/><stop offset="1" stop-color="#5a5a5a"/></linearGradient></defs><rect x="1.5" y="1.5" width="14.5" height="15" fill="#f0f0f0" stroke="#4a4a4a" stroke-width="1"/><path d="M2 2H8.5V16H2Z" fill="url(#dg)"/><path d="M2 16L8.5 10V16Z" fill="#d8d8d8"/><path d="M6.8 9L11.2 4.4V7H16.6V11H11.2V13.6Z" fill="#ff7000" stroke="#e01800" stroke-width="1.3" stroke-linejoin="round"/></svg>
<div class="t" style="left:915.00px;top:52.25px;font-size:15px;line-height:15px;color:#000;letter-spacing:0.163px;">Quit</div>
<div class="b" style="left:914px;top:67px;width:11px;height:1px;background:#000;"></div>
<div class="b" style="left:351px;top:78px;width:611px;height:571px;background:#000;border:1px solid #fdfdfd;"></div>
<div class="b" style="left:350px;top:372px;width:1px;height:1px;background:#8a8a8a;border-radius:50%;"></div>
<div class="b" style="left:650px;top:649px;width:1px;height:1px;background:#8a8a8a;border-radius:50%;"></div>
<div class="b" style="left:350px;top:375px;width:1px;height:1px;background:#8a8a8a;border-radius:50%;"></div>
<div class="b" style="left:653px;top:649px;width:1px;height:1px;background:#8a8a8a;border-radius:50%;"></div>
<div class="b" style="left:350px;top:378px;width:1px;height:1px;background:#8a8a8a;border-radius:50%;"></div>
<div class="b" style="left:656px;top:649px;width:1px;height:1px;background:#8a8a8a;border-radius:50%;"></div>
<div class="b" style="left:350px;top:381px;width:1px;height:1px;background:#8a8a8a;border-radius:50%;"></div>
<div class="b" style="left:659px;top:649px;width:1px;height:1px;background:#8a8a8a;border-radius:50%;"></div>
<div class="b" style="left:350px;top:384px;width:1px;height:1px;background:#8a8a8a;border-radius:50%;"></div>
<div class="b" style="left:662px;top:649px;width:1px;height:1px;background:#8a8a8a;border-radius:50%;"></div>
<div class="b" style="left:350px;top:387px;width:1px;height:1px;background:#8a8a8a;border-radius:50%;"></div>
<div class="b" style="left:665px;top:649px;width:1px;height:1px;background:#8a8a8a;border-radius:50%;"></div>
<svg class="b" style="left:352px;top:79px" width="609" height="569" viewBox="352 79 609 569">
<defs>
<filter id="nz" x="0" y="0" width="1" height="1" filterUnits="objectBoundingBox" color-interpolation-filters="sRGB">
<feTurbulence type="fractalNoise" baseFrequency="0.55" numOctaves="3" seed="11" result="n"/>
<feColorMatrix type="matrix" values="1 0 0 0 0  1 0 0 0 0  1 0 0 0 0  0 0 0 0 1"/>
<feComponentTransfer><feFuncR type="table" tableValues="0.000 0.000 0.000 0.000 0.000 0.000 0.000 0.001 0.001 0.002 0.005 0.009 0.015 0.024 0.038 0.058 0.087 0.126 0.174 0.226 0.244 0.267 0.293 0.322 0.355 0.392 0.434 0.471 0.495 0.521 0.550 0.580 0.608 0.641 0.669 0.695 0.719 0.742 0.767 0.792 0.815 0.835 0.853 0.868 0.881 0.893 0.914 0.932 0.947 0.958 0.968 0.980 0.987 0.992 0.996 0.998 0.999 1.000 1.000 1.000 1.000 1.000 1.000 1.000 1.000"/><feFuncG type="table" tableValues="0.000 0.000 0.000 0.000 0.000 0.000 0.000 0.001 0.001 0.002 0.005 0.009 0.015 0.024 0.038 0.058 0.087 0.126 0.174 0.226 0.244 0.267 0.293 0.322 0.355 0.392 0.434 0.471 0.495 0.521 0.550 0.580 0.608 0.641 0.669 0.695 0.719 0.742 0.767 0.792 0.815 0.835 0.853 0.868 0.881 0.893 0.914 0.932 0.947 0.958 0.968 0.980 0.987 0.992 0.996 0.998 0.999 1.000 1.000 1.000 1.000 1.000 1.000 1.000 1.000"/><feFuncB type="table" tableValues="0.000 0.000 0.000 0.000 0.000 0.000 0.000 0.001 0.001 0.002 0.005 0.009 0.015 0.024 0.038 0.058 0.087 0.126 0.174 0.226 0.244 0.267 0.293 0.322 0.355 0.392 0.434 0.471 0.495 0.521 0.550 0.580 0.608 0.641 0.669 0.695 0.719 0.742 0.767 0.792 0.815 0.835 0.853 0.868 0.881 0.893 0.914 0.932 0.947 0.958 0.968 0.980 0.987 0.992 0.996 0.998 0.999 1.000 1.000 1.000 1.000 1.000 1.000 1.000 1.000"/></feComponentTransfer>
</filter>
<clipPath id="cp"><polygon points="758,110 919,271 598.5,590 438,429.5"/></clipPath>
</defs>
<g clip-path="url(#cp)"><rect x="430" y="100" width="500" height="500" filter="url(#nz)"/></g>
<path d="M567 558L886 239M500 368L661 527" stroke="#000" stroke-width="3.5" stroke-opacity="0.95"/>
</svg>
<svg class="b" style="left:352px;top:79px" width="609" height="569" viewBox="352 79 609 569"><rect x="398" y="88" width="1" height="526" fill="#969696"/><rect x="404" y="619" width="549" height="1" fill="#969696"/><rect x="399" y="590.8" width="4" height="1" fill="#969696"/><rect x="436.9" y="614" width="1" height="5" fill="#969696"/><rect x="399" y="503.1" width="4" height="1" fill="#969696"/><rect x="524.9" y="614" width="1" height="5" fill="#969696"/><rect x="399" y="415.3" width="4" height="1" fill="#969696"/><rect x="612.9" y="614" width="1" height="5" fill="#969696"/><rect x="399" y="327.6" width="4" height="1" fill="#969696"/><rect x="700.9" y="614" width="1" height="5" fill="#969696"/><rect x="399" y="239.8" width="4" height="1" fill="#969696"/><rect x="788.9" y="614" width="1" height="5" fill="#969696"/><rect x="399" y="152.1" width="4" height="1" fill="#969696"/><rect x="876.9" y="614" width="1" height="5" fill="#969696"/><rect x="410" y="88" width="1" height="525" fill="#ff0000"/><rect x="404" y="351" width="548" height="1" fill="#ff0000"/></svg>
<div class="t" style="left:384.70px;top:583.25px;font-size:16px;line-height:16px;color:#9a9a9a;-webkit-text-stroke:0.3px #9a9a9a;">0</div>
<div class="t" style="left:433.05px;top:621.25px;font-size:16px;line-height:16px;color:#9a9a9a;-webkit-text-stroke:0.3px #9a9a9a;">0</div>
<div class="t" style="left:367.20px;top:496.25px;font-size:16px;line-height:16px;color:#9a9a9a;letter-spacing:-0.248px;-webkit-text-stroke:0.3px #9a9a9a;">100</div>
<div class="t" style="left:512.30px;top:621.25px;font-size:16px;line-height:16px;color:#9a9a9a;letter-spacing:-0.248px;-webkit-text-stroke:0.3px #9a9a9a;">100</div>
<div class="t" style="left:367.20px;top:408.25px;font-size:16px;line-height:16px;color:#9a9a9a;letter-spacing:-0.248px;-webkit-text-stroke:0.3px #9a9a9a;">200</div>
<div class="t" style="left:600.30px;top:621.25px;font-size:16px;line-height:16px;color:#9a9a9a;letter-spacing:-0.248px;-webkit-text-stroke:0.3px #9a9a9a;">200</div>
<div class="t" style="left:367.20px;top:320.25px;font-size:16px;line-height:16px;color:#9a9a9a;letter-spacing:-0.248px;-webkit-text-stroke:0.3px #9a9a9a;">300</div>
<div class="t" style="left:688.30px;top:621.25px;font-size:16px;line-height:16px;color:#9a9a9a;letter-spacing:-0.248px;-webkit-text-stroke:0.3px #9a9a9a;">300</div>
<div class="t" style="left:367.20px;top:233.25px;font-size:16px;line-height:16px;color:#9a9a9a;letter-spacing:-0.248px;-webkit-text-stroke:0.3px #9a9a9a;">400</div>
<div class="t" style="left:776.30px;top:621.25px;font-size:16px;line-height:16px;color:#9a9a9a;letter-spacing:-0.248px;-webkit-text-stroke:0.3px #9a9a9a;">400</div>
<div class="t" style="left:367.20px;top:145.25px;font-size:16px;line-height:16px;color:#9a9a9a;letter-spacing:-0.248px;-webkit-text-stroke:0.3px #9a9a9a;">500</div>
<div class="t" style="left:864.30px;top:621.25px;font-size:16px;line-height:16px;color:#9a9a9a;letter-spacing:-0.248px;-webkit-text-stroke:0.3px #9a9a9a;">500</div>
<div class="t" style="left:352.50px;top:658.25px;font-size:15px;line-height:15px;color:#000;letter-spacing:0.009px;">Pixel position and intensity:</div>
<div class="b" style="left:702px;top:659px;width:14px;height:14px;background:#fff;border:1px solid #a8a8a8;border-radius:1px;"></div>
<svg class="b" style="left:703px;top:660px" width="12" height="12" viewBox="0 0 11 11"><path d="M1.5 5.5L4.3 9L9.5 1.5" fill="none" stroke="#000" stroke-width="1.8"/></svg>
<div class="t" style="left:721.90px;top:658.25px;font-size:15px;line-height:15px;color:#000;letter-spacing:-0.184px;">Crosshair locker</div>
<div class="b" style="left:881px;top:652px;width:80px;height:27px;background:linear-gradient(#fdfdfd,#f0f0f0);border:1px solid #ababab;border-radius:3px;"></div>
<div class="t" style="left:897.00px;top:658.25px;font-size:15px;line-height:15px;color:#000;letter-spacing:-0.360px;">Axes ...</div>
<div class="b" style="left:352px;top:685px;width:477px;height:26px;background:#fff;border:1px solid #aaaaaa;border-radius:3px;"></div>
<div class="t" style="left:355.50px;top:691.25px;font-size:15px;line-height:15px;color:#000;letter-spacing:0.419px;">x = -30.000000, y = 273.000000, intensity = 0.00</div>
<div class="b" style="left:835px;top:685px;width:126px;height:27px;background:linear-gradient(#fdfdfd,#f1f1f1);border:1px solid #ababab;border-radius:3px;"></div>
<div class="t" style="left:840.70px;top:691.25px;font-size:15px;line-height:15px;color:#000;letter-spacing:-0.410px;font-weight:bold;">Intensity</div>
<svg class="b" style="left:944px;top:696px" width="10" height="6"><path d="M0.6 0.3H9.4L5 4.8Z" fill="#6a6a6a"/></svg>
</body></html>
